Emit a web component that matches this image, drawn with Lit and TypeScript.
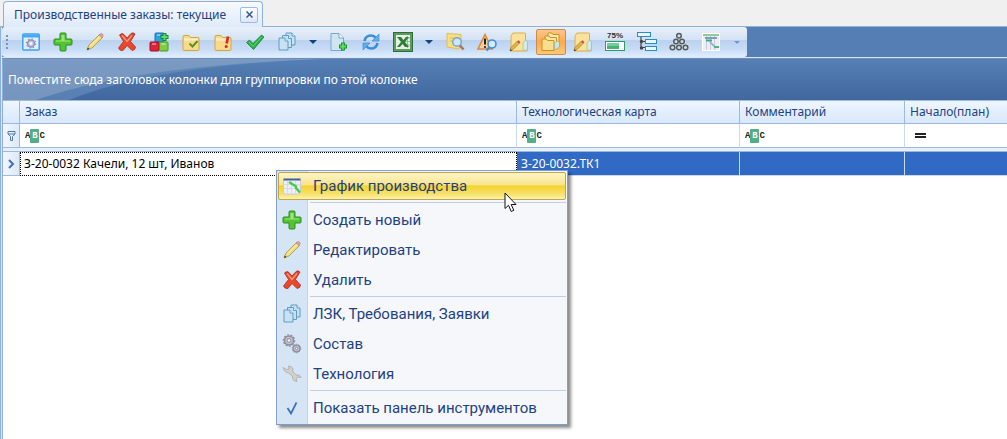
import { LitElement, html, svg, css, nothing } from "lit";
import { customElement, property } from "lit/decorators.js";

const sheet = (x: number, y: number) => svg`<path d="M${x} ${y}h6l3 3v9h-9z" fill="#c9e2f3" stroke="#5f9cc4"/><path d="M${x + 6} ${y}v3h3" fill="#fff" stroke="#5f9cc4"/>`;
const folder = svg`<path d="M1 3.500q0-1 1-1h5l1.500 2h7.500q1 0 1 1v11q0 1-1 1h-14q-1 0-1-1z" fill="#f9d98b" stroke="#d9a441"/><path d="M2 6.500h14" stroke="#fdf0c4" stroke-width="2"/>`;
const pencil = svg`<path d="M1 17l2-5L13.500 1.500l3 3L6 15z" fill="#f0dc7a" stroke="#a89545" stroke-width=".8"/><path d="M13 2l1.500-1.300q1-.6 2 .4t.5 2L15.800 4.800z" fill="#e79a92" stroke="#b5736d" stroke-width=".5"/><path d="M1 17l.8-2.400 1.700 1.500z" fill="#333"/><path d="M4.500 13L14 3.500" stroke="#fff7bd"/>`;
const note = svg`<path d="M3 0h11.500q1 0 1 1v7l1.500 1.500V18H1V3z" fill="#fbe29c" stroke="#dcae50"/><path d="M13 17.500V9l3-2 1.500 2v8z" fill="#d4eae4" stroke="#8fb8ad" stroke-width=".6"/><path d="M0 18l1-3.500 6-6 2 2-6 6z" fill="#e9b93c" stroke="#96722a" stroke-width=".7"/><path d="M7 8.500l1.500-1.300 2 2L9 10.500z" fill="#d9463a"/><path d="M0 18l.5-2 1.500 1.500z" fill="#333"/>`;
const chart = svg`<path d="M.5 2.500h17V15l-2 2h-15z" fill="#eceff8" stroke="#c8cce0"/><path d="M.5 1.500h17v2H.5z" fill="#43609d"/><path d="M4.500 4v12M8.500 4v12M12.500 4v12M1 7.500h16M1 11.500h16" stroke="#ccd2e6" stroke-width=".7"/>`;

const icons: Record<string, unknown> = {
  settings: svg`<rect x=".8" y="1" width="16.400" height="16" rx="1" fill="#e3eefb" stroke="#41a2ea" stroke-width="1.500"/><path d="M1 1.500h16v3H1z" fill="#46aaf0"/><circle cx="9" cy="10.500" r="3.400" fill="#c9cbe4" stroke="#8f94bf" stroke-width="1.500"/><circle cx="9" cy="10.500" r="4.600" fill="none" stroke="#8f94bf" stroke-width="1.200" stroke-dasharray="1.600 2"/><circle cx="9" cy="10.500" r="1.200" fill="#fff"/>`,
  add: svg`<path d="M6 1q0-1 1-1h4q1 0 1 1V6h5q1 0 1 1v4q0 1-1 1h-5v5q0 1-1 1H7q-1 0-1-1V12H1q-1 0-1-1V7q0-1 1-1H6z" fill="#52c432" stroke="#2c8c1d"/><path d="M7.500 2h3v5.500H16v1H2v-1h5.500z" fill="#9be57c"/>`,
  edit: pencil,
  remove: svg`<path d="M1.500 2Q4-.5 6 1.500L9 5l4-4.500q2-1.500 4 .5l-4.500 7.500 5 5.500q0 3-3.500 3.500L9 12.500 5 17.500q-3.500 .5-4.500-2.500l5-6.500z" fill="#e9482c" stroke="#a82d1a" stroke-width=".8"/><path d="M4 2.500l5 6 5-6" stroke="#ff9d7b" stroke-width="1.300" fill="none"/>`,
  blocks: svg`<rect x="5" y="0" width="9" height="9" rx="1" fill="#2c9fe0" stroke="#1773b7"/><rect x="0" y="9" width="9" height="9" rx="1" fill="#dc2436" stroke="#a30e20"/><rect x="9.500" y="9" width="8.500" height="9" rx="1" fill="#7ccf44" stroke="#429d20"/><path d="M2 11h4M11.500 11h4M7 2h3" stroke="#fff" opacity=".5" stroke-width="1.500"/><path d="M14.500 0v8M10.500 4h8" stroke="#168b36" stroke-width="4"/><path d="M14.500 1v6M11.500 4h6" stroke="#64dd62" stroke-width="1.800"/>`,
  folderOk: svg`${folder}<path d="M7.500 10.500l3 3 5-5.500" fill="none" stroke="#55951c" stroke-width="2"/>`,
  folderAlert: svg`${folder}<path d="M14 3.500l-1.300 7" stroke="#df2717" stroke-width="2.600"/><circle cx="12.200" cy="13.500" r="1.500" fill="#df2717"/>`,
  check: svg`<path d="M.5 9.500l3-2.500 3.500 3.500L15.500 2 18 4 7.500 16.500z" fill="#2ab04a" stroke="#188337" stroke-width=".8"/><path d="M3 9l4 4.500L15.500 4" fill="none" stroke="#67d474"/>`,
  sheets: svg`${sheet(8, 0)}${sheet(4.500, 2.500)}${sheet(1, 5)}`,
  sheetAdd: svg`<path d="M1 .5h8l4.500 4.500v12.500H1z" fill="#cfe5f2" stroke="#79a9c7"/><path d="M9 .5V5h4.500" fill="#f3fafd" stroke="#79a9c7"/><path d="M13 9.500v8M9 13.500h8" stroke="#1c9434" stroke-width="4"/><path d="M13 10.500v6M10 13.500h6" stroke="#60dc5d" stroke-width="1.800"/>`,
  refresh: svg`<path d="M2.500 8q1-5.500 6.500-5.500 3 0 4.700 2.200" fill="none" stroke="#3d8ed8" stroke-width="2.600"/><path d="M17 1v7h-7z" fill="#63ade9" stroke="#3d8ed8" stroke-width=".7"/><path d="M15.500 10q-1 5.500-6.500 5.500-3 0-4.700-2.200" fill="none" stroke="#3d8ed8" stroke-width="2.600"/><path d="M1 17v-7h7z" fill="#63ade9" stroke="#3d8ed8" stroke-width=".7"/>`,
  excel: svg`<rect x="-.5" y="-.5" width="19" height="19" fill="#5c9a60" stroke="#2e6c3a"/><path d="M2 2h14v14H2z" fill="#e6f1e2"/><path d="M11 5h5M11 8.500h5M11 12h5M13.500 3v12" stroke="#8fc192"/><path d="M3 4h4l2.500 3 2.500-3h3l-4 5 4 5h-4l-2.500-3L6 14H3l4-5z" fill="#2f7d3c"/>`,
  noteFind: svg`<path d="M1 .5l14 1V8l-2 8-12-2z" fill="#f9df82" stroke="#dfbd55"/><path d="M4 5l5 .4M3.500 8h3" stroke="#dfb64f"/><circle cx="11" cy="9" r="4.300" fill="#cbe6fa" stroke="#75a6d3" stroke-width="1.500"/><path d="M14 12.500l3.500 4" stroke="#a9764f" stroke-width="2.500"/>`,
  alertFind: svg`<path d="M7 1.500L14 16H0z" fill="#fbd09a" stroke="#e2883c" stroke-width="1.600"/><path d="M7 5.500v6" stroke="#222" stroke-width="2"/><circle cx="7" cy="14" r="1.100" fill="#222"/><circle cx="14" cy="11" r="4" fill="#d4ebfc" stroke="#438fd1" stroke-width="1.600"/><path d="M11.500 14l-3 3.500" stroke="#438fd1" stroke-width="2.200"/>`,
  note,
  folders: svg`<path d="M6 0h4l1 1.500h6V12H6z" fill="#fde7a5" stroke="#c5922b"/><path d="M3 3h4L8 4.500h6.500v10.500H3z" fill="#fde7a5" stroke="#c5922b"/><path d="M0 6h4.500l1 1.500h6.500v10H0z" fill="#fbdd8c" stroke="#c5922b"/><path d="M12.500 16v-6l3-2 2 1v5l-4.500 3z" fill="#cce6dd" stroke="#78a99b" stroke-width=".6"/>`,
  percent: svg`<text x="9" y="4.500" text-anchor="middle" font-family="Liberation Sans, sans-serif" font-size="8" font-weight="700" fill="#333">75%</text><rect x="-.5" y="8.500" width="19" height="9" fill="#fff" stroke="#2d9c64"/><path d="M1 10h12v6H1z" fill="#45b27a"/><path d="M1 10h12v3H1z" fill="#75cd9b"/>`,
  tree: svg`<path d="M3 4v10.500h5M3 8.500h5" stroke="#444" fill="none" stroke-width="1.200"/><rect x="-.5" y="-.5" width="13" height="4" fill="#e8f7ff" stroke="#278dc9"/><rect x="7.500" y="6.500" width="11" height="4" fill="#e8f7ff" stroke="#278dc9"/><rect x="7.500" y="13.500" width="11" height="4" fill="#e8f7ff" stroke="#278dc9"/><circle cx="3.500" cy="8.500" r="1.700" fill="#444"/><circle cx="3.500" cy="15" r="1.700" fill="#444"/>`,
  rings: svg`<g fill="#d5d9de" stroke="#565b62" stroke-width="1.500"><circle cx="9" cy="2.800" r="2.300"/><circle cx="6" cy="8.500" r="2.300"/><circle cx="12" cy="8.500" r="2.300"/><circle cx="2.500" cy="14.500" r="2.300"/><circle cx="9" cy="14.500" r="2.300"/><circle cx="15.500" cy="14.500" r="2.300"/></g>`,
  gantt: svg`<path d="M.5.500h17v17H.5z" fill="#eceef7" stroke="#fff"/><path d="M4.500 1v16M8.500 1v16M12.500 1v16" stroke="#cdcbe0"/><path d="M1 2h16" stroke="#9cc795" stroke-width="2"/><path d="M3 5h12" stroke="#5f8cb0" stroke-width="1.600"/><path d="M4 7.500h6" stroke="#3fae74" stroke-width="2"/><path d="M8 9l6 6" stroke="#8aa6d6" stroke-width="1.600"/><path d="M12 14h5" stroke="#54b67c" stroke-width="2"/>`,
  plan: svg`${chart}<path d="M6 5l7 4.500v1.500l4 4.500" stroke="#4acb45" stroke-width="2.400" fill="none"/>`,
  gears: svg`<g fill="#c3c2ce" stroke="#8e8c9d"><circle cx="6" cy="5.500" r="4.500" stroke-width="1.500"/><circle cx="6" cy="5.500" r="5.600" fill="none" stroke-width="1.300" stroke-dasharray="1.800 1.600"/><circle cx="6" cy="5.500" r="1.900" fill="#f0f0f5"/><circle cx="13.500" cy="13.500" r="3.400" stroke-width="1.300"/><circle cx="13.500" cy="13.500" r="4.300" fill="none" stroke-dasharray="1.400 1.300"/><circle cx="13.500" cy="13.500" r="1.200" fill="#f0f0f5"/></g>`,
  wrench: svg`<path d="M0 2.500l3.500 2L6 4 5.500 1q3.500 0 4.500 3l-.5 2 3.500 4q3.500-1 5 2.500l-3-.5-2 1.500 1 3q-3.500 0-4.500-3v-2.500L5.500 8Q1.500 7.500 0 2.500z" fill="#d2d0ce" stroke="#b0aeac" stroke-width=".9"/>`,
  tick: svg`<path d="M4.500 9l3.500 5.500L13.500 3.500" fill="none" stroke="#3b6fb4" stroke-width="1.700"/>`,
};

const icon = (name: string) => html`<svg class="icon" viewBox="0 0 18 18" aria-hidden="true">${icons[name]}</svg>`;

const iconStyles = css`
  .icon { display: block; width: 18px; height: 18px; overflow: visible; }
  button { font: inherit; color: inherit; padding: 0; border: 0; background: none; cursor: default; }
`;

@customElement("tool-bar")
class ToolBar extends LitElement {
  static styles = [iconStyles, css`
    :host { display: flex; background: #557fb4; }
    .bar {
      display: flex; align-items: center; height: 30px; padding: 0 0 0 4px; box-sizing: border-box;
      background: linear-gradient(#e9f1fa, #d3e2f4 42%, #bad1ef 44%, #c8dcf5 75%, #e0efff);
      border-radius: 3px;
    }
    .grip { width: 2px; height: 14px; margin-right: 7px; background: repeating-linear-gradient(#7595bf 0 2px, transparent 2px 4px); }
    .tool { display: grid; place-items: center; width: 32px; height: 28px; }
    .tool.on { width: 30px; margin: 0 1px; height: 26px; border: 1px solid #c39052; border-radius: 2px; background: linear-gradient(#fcc68b, #ffa94d 50%, #ffc873); box-sizing: border-box; }
    .drop { display: grid; place-items: center; width: 20px; height: 28px; }
    .caret { width: 0; height: 0; border: 4px solid transparent; border-top-color: #14427e; border-bottom: 0; }
    .more .caret { border-width: 3px; border-bottom: 0; border-top-color: #7797c2; }
  `];

  private tools: [string, string, ("drop" | "on")?][] = [
    ["settings", "Настройки"], ["add", "Создать новый"], ["edit", "Редактировать"], ["remove", "Удалить"],
    ["blocks", "Состав"], ["folderOk", "Выполнен"], ["folderAlert", "Внимание"], ["check", "Готово"],
    ["sheets", "ЛЗК, Требования, Заявки", "drop"], ["sheetAdd", "Добавить"], ["refresh", "Обновить"],
    ["excel", "Excel", "drop"], ["noteFind", "Поиск"], ["alertFind", "Проверка"], ["note", "Заметка"],
    ["folders", "Текущие", "on"], ["note", "Изменить"], ["percent", "Готовность"], ["tree", "Дерево"],
    ["rings", "Структура"], ["gantt", "График производства"],
  ];

  render() {
    return html`<div class="bar" role="toolbar">
      <span class="grip"></span>
      ${this.tools.map(([name, label, mode]) => html`
        <button class="tool ${mode === "on" ? "on" : ""}" aria-label=${label}>${icon(name)}</button>
        ${mode === "drop" ? html`<button class="drop" aria-label="${label}: меню"><span class="caret"></span></button>` : nothing}`)}
      <button class="drop more" aria-label="Ещё"><span class="caret"></span></button>
    </div>`;
  }
}

@customElement("order-grid")
class OrderGrid extends LitElement {
  static styles = css`
    :host { display: block; }
    .group { display: flex; align-items: center; position: relative; height: 41px; padding-left: 5px; color: #fff; background: linear-gradient(#557fb5, #41689e); }
    .swoosh { position: absolute; left: 0; top: 0; width: 330px; height: 41px; }
    .hint { position: relative; }
    table { width: 100%; border-collapse: separate; border-spacing: 0; table-layout: fixed; }
    .c-mark { width: 17px; }
    .c-card { width: 223px; }
    .c-note { width: 165px; }
    .c-start { width: 102px; }
    th, td { box-sizing: border-box; padding: 0 4px; text-align: left; font-weight: 400; white-space: nowrap; overflow: hidden; border-right: 1px solid #c8d9ec; }
    .head th { height: 24px; padding: 0 0 0 5px; color: #1e4282; background: linear-gradient(#eff6ff, #d8e8fc); border-top: 1px solid #9db9dc; border-bottom: 1px solid #9db9dc; border-right-color: #9db9dc; }
    .head th:last-child, .filter td:last-child, .data td:last-child { border-right: 0; }
    .filter td { height: 24px; background: #fff; border-bottom: 1px solid #9db9dc; }
    .split td { height: 4px; background: #e6f0fc; border-right: 0; border-bottom: 1px solid #9db9dc; }
    .mark, .filter .mark { padding: 0; background: linear-gradient(90deg, #f3f8ff, #dbe9fb); border-right-color: #9db9dc; }
    .mark svg { display: block; margin: 0 auto; }
    .data td { height: 24px; border-bottom: 1px solid #c8d9ec; }
    .data .picked { color: #fff; background: #316ac5; }
    .data .focus { color: #000; border: 1px dotted #000; padding-left: 3px; }
    .data .mark { border-bottom-color: #9db9dc; }
    .cond { display: flex; align-items: center; gap: 4px; }
    .cond input { flex: 1; min-width: 0; height: 18px; padding: 0; border: 0; outline: 0; background: none; font: inherit; }
    .abc { display: flex; align-items: center; font: 700 9px/14px "Liberation Mono", monospace; color: #222; padding-left: 1px; }
    .abc b { width: 9px; text-align: center; color: #fff; background: #55ac88; border-radius: 1px; }
    .eq { width: 11px; height: 1px; margin: 0 6px; border-top: 2px solid #222; border-bottom: 2px solid #222; }
  `;

  private columns = ["Заказ", "Технологическая карта", "Комментарий", "Начало(план)"];

  render() {
    return html`
      <div class="group">
        <svg class="swoosh" viewBox="0 0 330 41" preserveAspectRatio="none" aria-hidden="true">
          <path d="M0 0h320Q150 7 66 41H0z" fill="#6f95c6" opacity=".5"/>
          <path d="M0 0h320Q130 7 33 41H0z" fill="#8ba5c6" opacity=".6"/>
        </svg>
        <span class="hint">Поместите сюда заголовок колонки для группировки по этой колонке</span>
      </div>
      <table>
        <colgroup><col class="c-mark"><col><col class="c-card"><col class="c-note"><col class="c-start"></colgroup>
        <thead><tr class="head"><th class="corner"></th>${this.columns.map((c) => html`<th scope="col">${c}</th>`)}</tr></thead>
        <tbody>
          <tr class="filter">
            <td class="mark"><svg width="9" height="10" viewBox="0 0 9 10"><path d="M1 .5h7v2.500L5.500 5.500v4h-2v-4L1 3zM1 3h7" fill="none" stroke="#5478ae"/></svg></td>
            ${this.columns.map((c, i) => html`<td><label class="cond">
              ${i < 3 ? html`<span class="abc">A<b>B</b>C</span>` : html`<span class="eq"></span>`}
              <input type="text" aria-label="Фильтр: ${c}"></label></td>`)}
          </tr>
          <tr class="split"><td colspan="5"></td></tr>
          <tr class="data">
            <td class="mark"><svg width="8" height="10" viewBox="0 0 8 10"><path d="M2 1l4 4-4 4" fill="none" stroke="#4a70a8" stroke-width="2"/></svg></td>
            <td class="focus">З-20-0032 Качели, 12 шт, Иванов</td>
            <td class="picked">З-20-0032.ТК1</td><td class="picked"></td><td class="picked"></td>
          </tr>
        </tbody>
      </table>`;
  }
}

@customElement("context-menu")
class ContextMenu extends LitElement {
  static styles = [iconStyles, css`
    :host {
      display: block; padding: 1px; border: 1px solid #7f9fc6; box-shadow: 3px 3px 3px rgba(0, 0, 0, .45);
      background: linear-gradient(90deg, #d6e5f5 30px, #c0d3e8 30px 31px, #f5f7fa 31px);
      font: 15px/20px Roboto, "Noto Sans", sans-serif; color: #1e4282;
    }
    .item { display: grid; grid-template-columns: 30px 1fr; align-items: center; column-gap: 5px; width: 100%; height: 30px; text-align: left; white-space: nowrap; }
    .item .icon { margin-left: 5px; }
    .item.hot { height: 28px; margin: 0 0 2px; border: 1px solid #c5a54c; border-radius: 2px; background: linear-gradient(#fdf5c9, #f9e48c 45%, #f3d32f 50%, #f8e169 80%, #fdf2b2); }
    .item.hot .icon { margin-left: 4px; }
    .item.hot span { margin-left: -1px; }
    hr { height: 1px; margin: 1px 0 2px 32px; border: 0; background: #bfd0e4; }
  `];

  @property({ attribute: false }) groups: [string, string][][] = [];

  render() {
    return html`${this.groups.map((group, g) => html`
      ${g ? html`<hr>` : nothing}
      ${group.map(([name, label]) => html`<button class="item ${g === 0 ? "hot" : ""}" role="menuitem">${icon(name)}<span>${label}</span></button>`)}`)}`;
  }
}

@customElement("app-root")
class AppRoot extends LitElement {
  static styles = [iconStyles, css`
    :host { display: flex; flex-direction: column; position: relative; min-height: 100vh; background: #fff; font: 12px/16px "Noto Sans", "DejaVu Sans", sans-serif; color: #000; }
    .tabs { display: flex; align-items: flex-end; height: 27px; padding-left: 3px; background: #f0f0f0; border-bottom: 1px solid #8fb0dc; box-sizing: border-box; }
    .tab { display: flex; align-items: center; gap: 14px; height: 26px; margin-bottom: -1px; padding: 0 4px 0 10px; box-sizing: border-box; border: 1px solid #8fb0dc; border-bottom: 0; border-radius: 4px 4px 0 0; background: linear-gradient(#f7faff, #dfeafa); color: #1e4282; }
    .close { display: grid; place-items: center; width: 18px; height: 16px; border: 1px solid #9dbbe0; border-radius: 2px; background: linear-gradient(#fff, #dbe7f7); box-sizing: border-box; }
    .page { flex: 1; border-left: 1px solid #8fb0dc; padding-left: 1px; background: #d6e6fa; display: flex; flex-direction: column; }
    .body { flex: 1; border-left: 1px solid #8fb0dc; border-top: 1px solid #6f8fb8; margin-top: 1px; background: #fff; }
    .menu { position: absolute; left: 276px; top: 170px; width: 288px; }
    .cursor { position: absolute; left: 504px; top: 192px; width: 13px; height: 21px; }
  `];

  private groups: [string, string][][] = [
    [["plan", "График производства"]],
    [["add", "Создать новый"], ["edit", "Редактировать"], ["remove", "Удалить"]],
    [["sheets", "ЛЗК, Требования, Заявки"], ["gears", "Состав"], ["wrench", "Технология"]],
    [["tick", "Показать панель инструментов"]],
  ];

  render() {
    return html`
      <div class="tabs"><div class="tab"><span>Производственные заказы: текущие</span>
        <button class="close" aria-label="Закрыть"><svg width="7" height="7" viewBox="0 0 7 7"><path d="M.5.500l6 6M6.500.500l-6 6" stroke="#33578f" stroke-width="1.500"/></svg></button></div></div>
      <div class="page">
        <tool-bar></tool-bar>
        <div class="body"><order-grid></order-grid></div>
      </div>
      <context-menu class="menu" role="menu" .groups=${this.groups}></context-menu>
      <svg class="cursor" viewBox="0 0 13 21" aria-hidden="true"><path d="M1 1v15.500l3.500-3.200 2.700 6.200 2.600-1.200L7.200 12.500H12z" fill="#fff" stroke="#111"/></svg>`;
  }
}
